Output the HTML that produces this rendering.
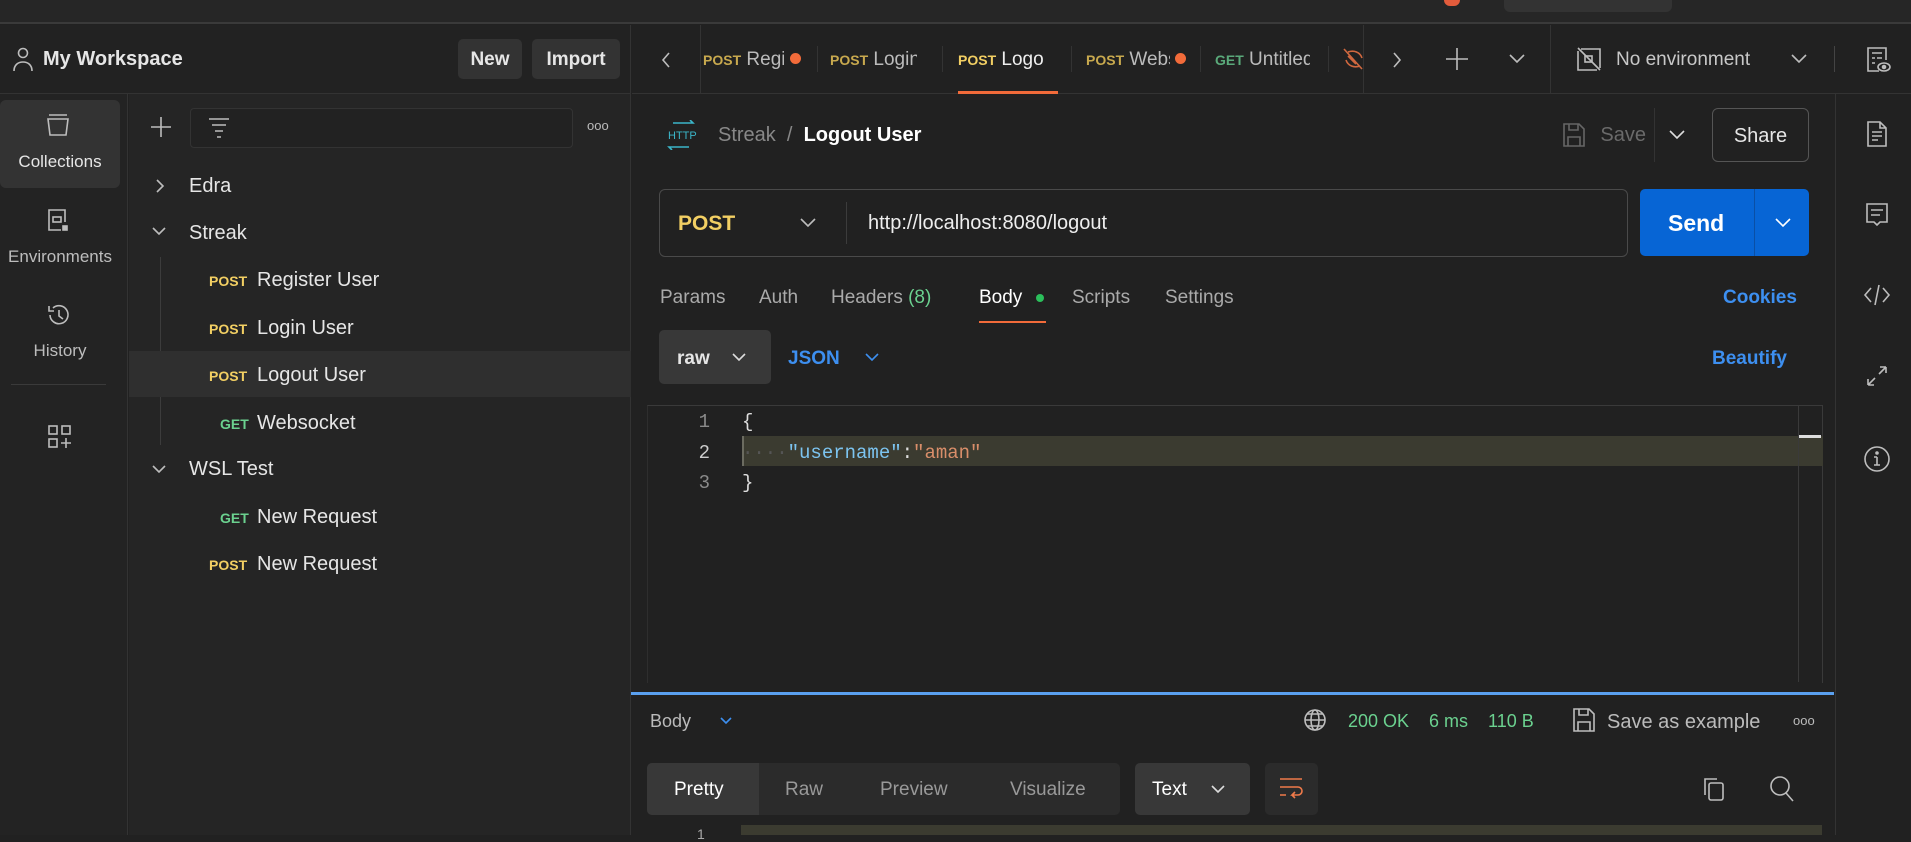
<!DOCTYPE html>
<html><head><meta charset="utf-8"><style>
*{box-sizing:border-box;margin:0;padding:0}
body{width:1911px;height:835px;background:#212121;font-family:"Liberation Sans",sans-serif;color:#e6e6e6;position:relative;overflow:hidden}
.a{position:absolute;white-space:nowrap}
svg{position:absolute;fill:none;stroke:#bdbdbd;stroke-width:1.6}
.post{color:#f2cf63;font-weight:bold;font-size:14px}
.get{color:#6bd18f;font-weight:bold;font-size:14px}
.ti{font-size:20px;color:#e6e6e6}
.tab{position:absolute;top:49px;font-size:19px;color:#bbb;white-space:nowrap;overflow:hidden}
</style></head><body>
<!-- top bar -->
<div class="a" style="left:0;top:0;width:1911px;height:24px;background:#262626;border-bottom:2px solid #3a3a3a"></div>
<div class="a" style="left:1444px;top:0;width:16px;height:6px;background:#e25c3c;border-radius:0 0 8px 8px"></div>
<div class="a" style="left:1504px;top:0;width:168px;height:12px;background:#333;border-radius:0 0 6px 6px"></div>
<!-- left header -->
<div class="a" style="left:0;top:25px;width:631px;height:69px;background:#222;border-bottom:1px solid #333;border-right:1px solid #333"></div>
<svg style="left:11px;top:46px" width="24" height="26" viewBox="0 0 24 26"><circle cx="12" cy="7" r="4.5"/><path d="M3 25c0-6 4-9 9-9s9 3 9 9"/></svg>
<div class="a" style="left:43px;top:48px;font-size:20px;font-weight:bold">My Workspace</div>
<div class="a" style="left:458px;top:39px;width:64px;height:40px;background:#333;border-radius:5px;font-size:19px;font-weight:bold;text-align:center;line-height:42px">New</div>
<div class="a" style="left:532px;top:39px;width:88px;height:40px;background:#333;border-radius:5px;font-size:19px;font-weight:bold;text-align:center;line-height:42px">Import</div>
<!-- icon nav -->
<div class="a" style="left:0;top:94px;width:128px;height:741px;background:#232323;border-right:1px solid #333"></div>
<div class="a" style="left:0;top:100px;width:120px;height:88px;background:#333;border-radius:6px"></div>
<svg style="left:46px;top:113px" width="24" height="26" viewBox="0 0 24 26"><path d="M3 2h18M2 6h20l-2 16H4z"/></svg>
<div class="a" style="left:0;top:152px;width:120px;text-align:center;font-size:17px">Collections</div>
<svg style="left:46px;top:208px" width="24" height="26" viewBox="0 0 24 26"><path d="M19 14V2H3v20h12"/><rect x="7" y="9" width="8" height="5"/><rect x="17" y="18" width="4" height="4" fill="#bdbdbd"/></svg>
<div class="a" style="left:0;top:247px;width:120px;text-align:center;font-size:17px;color:#bdbdbd">Environments</div>
<svg style="left:46px;top:302px" width="26" height="26" viewBox="0 0 26 26"><path d="M4 13a9 9 0 1 0 3-7M3 4v5h5M13 8v6l4 3"/></svg>
<div class="a" style="left:0;top:341px;width:120px;text-align:center;font-size:17px;color:#bdbdbd">History</div>
<div class="a" style="left:11px;top:384px;width:95px;height:1px;background:#3a3a3a"></div>
<svg style="left:47px;top:424px" width="26" height="26" viewBox="0 0 26 26"><rect x="2" y="2" width="8" height="8"/><rect x="15" y="2" width="8" height="8"/><rect x="2" y="15" width="8" height="8"/><path d="M19 14v10M14 19h10"/></svg>
<!-- collection tree -->
<div class="a" style="left:129px;top:94px;width:502px;height:741px;background:#252525;border-right:1px solid #333"></div>
<svg style="left:150px;top:116px" width="22" height="22" viewBox="0 0 22 22"><path d="M11 1v20M1 11h20"/></svg>
<div class="a" style="left:190px;top:108px;width:383px;height:40px;border:1px solid #333;border-radius:4px;background:#222"></div>
<svg style="left:208px;top:117px" width="22" height="22" viewBox="0 0 22 22"><path d="M1 2h20M4 8h14M7 14h8M9 20h4"/></svg>
<div class="a" style="left:587px;top:118px;font-size:13px;color:#bbb;letter-spacing:0px">ooo</div>
<svg style="left:154px;top:178px" width="12" height="16" viewBox="0 0 12 16"><path d="M3 2l6 6-6 6"/></svg>
<div class="a ti" style="left:189px;top:175px">Edra</div>
<svg style="left:151px;top:225px" width="16" height="12" viewBox="0 0 16 12"><path d="M2 3l6 6 6-6"/></svg>
<div class="a ti" style="left:189px;top:222px">Streak</div>
<div class="a" style="left:160px;top:257px;width:1px;height:188px;background:#3c3c3c"></div>
<div class="a" style="left:129px;top:351px;width:502px;height:46px;background:#2f2f2f"></div>
<div class="a post" style="left:209px;top:273px">POST</div><div class="a ti" style="left:257px;top:269px">Register User</div>
<div class="a post" style="left:209px;top:321px">POST</div><div class="a ti" style="left:257px;top:317px">Login User</div>
<div class="a post" style="left:209px;top:368px">POST</div><div class="a ti" style="left:257px;top:364px">Logout User</div>
<div class="a get" style="left:220px;top:416px">GET</div><div class="a ti" style="left:257px;top:412px">Websocket</div>
<svg style="left:151px;top:463px" width="16" height="12" viewBox="0 0 16 12"><path d="M2 3l6 6 6-6"/></svg>
<div class="a ti" style="left:189px;top:458px">WSL Test</div>
<div class="a get" style="left:220px;top:510px">GET</div><div class="a ti" style="left:257px;top:506px">New Request</div>
<div class="a post" style="left:209px;top:557px">POST</div><div class="a ti" style="left:257px;top:553px">New Request</div>
<!-- tabs bar -->
<div class="a" style="left:632px;top:25px;width:1279px;height:69px;border-bottom:1px solid #333"></div>
<svg style="left:660px;top:51px" width="12" height="18" viewBox="0 0 12 18"><path d="M9 2L3 9l6 7"/></svg>
<div class="a" style="left:700px;top:25px;width:1px;height:68px;background:#333"></div>
<div class="tab" style="left:703px;width:81px"><span class="post" style="color:#c8a94e">POST</span> Register</div>
<div class="a" style="left:790px;top:53px;width:11px;height:11px;border-radius:6px;background:#f26b3a"></div>
<div class="a" style="left:817px;top:46px;width:1px;height:26px;background:#333"></div>
<div class="tab" style="left:830px;width:87px"><span class="post" style="color:#c8a94e">POST</span> Login User</div>
<div class="a" style="left:942px;top:46px;width:1px;height:26px;background:#333"></div>
<div class="tab" style="left:958px;width:86px;color:#eee"><span class="post">POST</span> Logout</div>
<div class="a" style="left:958px;top:91px;width:100px;height:3px;background:#f26b3a"></div>
<div class="a" style="left:1071px;top:46px;width:1px;height:26px;background:#333"></div>
<div class="tab" style="left:1086px;width:84px"><span class="post" style="color:#c8a94e">POST</span> Websocket</div>
<div class="a" style="left:1175px;top:53px;width:11px;height:11px;border-radius:6px;background:#f26b3a"></div>
<div class="a" style="left:1200px;top:46px;width:1px;height:26px;background:#333"></div>
<div class="tab" style="left:1215px;width:95px"><span class="get" style="color:#5aa97a">GET</span> Untitled</div>
<div class="a" style="left:1328px;top:46px;width:1px;height:26px;background:#333"></div>
<svg style="left:1342px;top:46px;stroke:#d0683f" width="22" height="26" viewBox="0 0 22 26"><path d="M2 3l18 20M6 10l8 8M4 14c2 6 8 8 14 6M20 12c-2-6-8-8-14-6"/></svg>
<div class="a" style="left:1363px;top:25px;width:1px;height:68px;background:#333"></div>
<svg style="left:1391px;top:51px" width="12" height="18" viewBox="0 0 12 18"><path d="M3 2l6 7-6 7"/></svg>
<svg style="left:1445px;top:47px" width="24" height="24" viewBox="0 0 24 24"><path d="M12 1v22M1 12h22"/></svg>
<svg style="left:1508px;top:52px" width="18" height="12" viewBox="0 0 18 12"><path d="M2 3l7 7 7-7"/></svg>
<div class="a" style="left:1550px;top:25px;width:1px;height:68px;background:#333"></div>
<svg style="left:1576px;top:46px" width="26" height="26" viewBox="0 0 26 26"><path d="M5 3h19v19M21 24H2V5M2 2l22 22"/><rect x="9" y="10" width="7" height="6"/></svg>
<div class="a" style="left:1616px;top:49px;font-size:19px;color:#c8c8c8">No environment</div>
<svg style="left:1790px;top:52px" width="18" height="12" viewBox="0 0 18 12"><path d="M2 3l7 7 7-7"/></svg>
<div class="a" style="left:1834px;top:46px;width:1px;height:26px;background:#444"></div>
<svg style="left:1865px;top:46px" width="26" height="28" viewBox="0 0 26 28"><path d="M14 25H3V2h18v12M7 7h10M7 12h3M12 12h5M7 17h3"/><ellipse cx="19" cy="21" rx="6" ry="4"/><circle cx="19" cy="21" r="1.5" fill="#bdbdbd"/></svg>
<!-- right sidebar -->
<div class="a" style="left:1835px;top:94px;width:1px;height:741px;background:#333"></div>
<svg style="left:1866px;top:120px" width="22" height="28" viewBox="0 0 22 28"><path d="M2 2h12l6 6v18H2zM14 2v6h6M6 12h10M6 16h10M6 20h6"/></svg>
<svg style="left:1865px;top:202px" width="24" height="26" viewBox="0 0 24 26"><path d="M2 2h20v18H15l-3 3-3-3H2zM6 8h12M6 13h9"/></svg>
<svg style="left:1863px;top:284px" width="28" height="22" viewBox="0 0 28 22"><path d="M8 4L2 11l6 7M20 4l6 7-6 7M16 1L12 21"/></svg>
<svg style="left:1866px;top:365px" width="22" height="22" viewBox="0 0 22 22"><path d="M2 20L9 13M2 20v-6M2 20h6M20 2l-7 7M20 2v6M20 2h-6"/></svg>
<svg style="left:1863px;top:445px" width="28" height="28" viewBox="0 0 28 28"><circle cx="14" cy="14" r="12"/><path d="M14 12v8M11 20h6M11 12h3"/><circle cx="14" cy="8" r="1" fill="#bdbdbd"/></svg>
<!-- breadcrumb -->
<svg style="left:665px;top:120px;stroke:#3bb6c9" width="32" height="30" viewBox="0 0 32 30"><path d="M8 3h20l-3-3M24 27H4l3 3"/><text x="3" y="19" font-size="11" fill="#3bb6c9" stroke="none" font-family="Liberation Sans">HTTP</text></svg>
<div class="a" style="left:718px;top:124px;font-size:20px;color:#888">Streak&nbsp;&nbsp;/&nbsp;&nbsp;<span style="color:#fff;font-weight:bold">Logout User</span></div>
<svg style="left:1562px;top:122px;stroke:#666" width="24" height="26" viewBox="0 0 24 26"><path d="M2 2h15l5 5v17H2zM7 2v6h9V2M6 24v-9h12v9"/></svg>
<div class="a" style="left:1571px;top:124px;width:75px;text-align:right;font-size:20px;color:#6a6a6a">Save</div>
<div class="a" style="left:1654px;top:108px;width:1px;height:54px;background:#333"></div>
<svg style="left:1668px;top:128px" width="18" height="12" viewBox="0 0 18 12"><path d="M2 3l7 7 7-7" stroke="#ddd"/></svg>
<div class="a" style="left:1712px;top:108px;width:97px;height:54px;border:1px solid #555;border-radius:6px;text-align:center;line-height:54px;font-size:20px">Share</div>
<!-- URL -->
<div class="a" style="left:659px;top:189px;width:969px;height:68px;border:1px solid #4a4a4a;border-radius:6px"></div>
<div class="a" style="left:678px;top:212px;font-size:21px;font-weight:bold;color:#f2cf63">POST</div>
<svg style="left:799px;top:216px" width="18" height="12" viewBox="0 0 18 12"><path d="M2 3l7 7 7-7"/></svg>
<div class="a" style="left:846px;top:202px;width:1px;height:42px;background:#3c3c3c"></div>
<div class="a" style="left:868px;top:212px;font-size:20px;color:#eee">http://localhost:8080/logout</div>
<div class="a" style="left:1640px;top:189px;width:169px;height:67px;background:#0765d5;border-radius:5px"></div>
<div class="a" style="left:1754px;top:189px;width:1px;height:67px;background:#0a4fa5"></div>
<div class="a" style="left:1668px;top:210px;font-size:23px;font-weight:bold;color:#fff">Send</div>
<svg style="left:1774px;top:216px;stroke:#fff" width="18" height="12" viewBox="0 0 18 12"><path d="M2 3l7 7 7-7"/></svg>
<!-- request tabs -->
<div class="a" style="left:660px;top:287px;font-size:19px;color:#aaa">Params</div>
<div class="a" style="left:759px;top:287px;font-size:19px;color:#aaa">Auth</div>
<div class="a" style="left:831px;top:287px;font-size:19px;color:#aaa">Headers <span style="color:#6bd18f">(8)</span></div>
<div class="a" style="left:979px;top:287px;font-size:19px;color:#fff">Body</div>
<div class="a" style="left:1036px;top:294px;width:8px;height:8px;border-radius:4px;background:#2bbf5b"></div>
<div class="a" style="left:979px;top:321px;width:67px;height:2px;background:#f26b3a"></div>
<div class="a" style="left:1072px;top:287px;font-size:19px;color:#aaa">Scripts</div>
<div class="a" style="left:1165px;top:287px;font-size:19px;color:#aaa">Settings</div>
<div class="a" style="left:1723px;top:287px;font-size:19px;font-weight:bold;color:#3d8ff0">Cookies</div>
<!-- raw JSON -->
<div class="a" style="left:659px;top:330px;width:112px;height:54px;background:#383838;border-radius:5px"></div>
<div class="a" style="left:677px;top:348px;font-size:19px;font-weight:bold">raw</div>
<svg style="left:731px;top:351px;stroke:#ddd" width="16" height="12" viewBox="0 0 16 12"><path d="M2 3l6 6 6-6"/></svg>
<div class="a" style="left:788px;top:348px;font-size:19px;font-weight:bold;color:#3d8ff0">JSON</div>
<svg style="left:864px;top:351px;stroke:#3d8ff0" width="16" height="12" viewBox="0 0 16 12"><path d="M2 3l6 6 6-6"/></svg>
<div class="a" style="left:1712px;top:348px;font-size:19px;font-weight:bold;color:#3d8ff0">Beautify</div>
<!-- editor -->
<div class="a" style="left:647px;top:405px;width:1176px;height:278px;border-top:1px solid #3a3a3a;border-left:1px solid #2e2e2e;border-right:1px solid #3a3a3a"></div>
<div class="a" style="left:742px;top:436px;width:1081px;height:30px;background:#3b3b30;border-left:2px solid #6b6b60"></div>
<div class="a" style="left:1798px;top:406px;width:1px;height:276px;background:#3a3a3a"></div>
<div class="a" style="left:1799px;top:435px;width:22px;height:3px;background:#ddd"></div>
<div class="a" style="font-family:'Liberation Mono',monospace;font-size:19px;left:692px;top:407px;color:#8a8a8a;line-height:30.5px;text-align:right;width:18px">1<br><span style="color:#ccc">2</span><br>3</div>
<div class="a" style="font-family:'Liberation Mono',monospace;font-size:19px;left:742px;top:407px;line-height:30.5px;color:#ddd">{<br><span style="color:#555">····</span><span style="color:#7cc4f0">"username"</span>:<span style="color:#d98e6a">"aman"</span><br>}</div>
<!-- response -->
<div class="a" style="left:631px;top:692px;width:1203px;height:3px;background:#5aa0ef"></div>
<div class="a" style="left:650px;top:711px;font-size:18px;color:#bbb">Body</div>
<svg style="left:719px;top:716px;stroke:#3d8ff0" width="14" height="10" viewBox="0 0 14 10"><path d="M2 2l5 5 5-5"/></svg>
<svg style="left:1303px;top:708px" width="24" height="24" viewBox="0 0 24 24"><circle cx="12" cy="12" r="10"/><ellipse cx="12" cy="12" rx="4" ry="10"/><path d="M2 12h20M4 6h16M4 18h16"/></svg>
<div class="a" style="left:1348px;top:711px;font-size:18px;color:#6bd18f">200 OK&nbsp;&nbsp;&nbsp;&nbsp;6 ms&nbsp;&nbsp;&nbsp;&nbsp;110 B</div>
<svg style="left:1572px;top:707px" width="24" height="26" viewBox="0 0 24 26"><path d="M2 2h15l5 5v17H2zM7 2v6h9V2M6 24v-9h12v9"/></svg>
<div class="a" style="left:1607px;top:711px;font-size:20px;color:#bbb">Save as example</div>
<div class="a" style="left:1793px;top:713px;font-size:13px;color:#bbb">ooo</div>
<div class="a" style="left:647px;top:763px;width:473px;height:52px;background:#2b2b2b;border-radius:5px"></div>
<div class="a" style="left:647px;top:763px;width:112px;height:52px;background:#383838;border-radius:5px 0 0 5px"></div>
<div class="a" style="left:674px;top:779px;font-size:19px;color:#fff">Pretty</div>
<div class="a" style="left:785px;top:779px;font-size:19px;color:#999">Raw</div>
<div class="a" style="left:880px;top:779px;font-size:19px;color:#999">Preview</div>
<div class="a" style="left:1010px;top:779px;font-size:19px;color:#999">Visualize</div>
<div class="a" style="left:1135px;top:763px;width:115px;height:52px;background:#383838;border-radius:5px"></div>
<div class="a" style="left:1152px;top:779px;font-size:19px;color:#fff">Text</div>
<svg style="left:1210px;top:783px;stroke:#ddd" width="16" height="12" viewBox="0 0 16 12"><path d="M2 3l6 6 6-6"/></svg>
<div class="a" style="left:1265px;top:763px;width:53px;height:52px;background:#2b2b2b;border-radius:5px"></div>
<svg style="left:1278px;top:776px;stroke:#f07a4a" width="26" height="26" viewBox="0 0 26 26"><path d="M2 3h22M2 11h18a4 4 0 0 1 0 8h-6l3-3M14 19l3 3M2 19h6"/></svg>
<svg style="left:1702px;top:776px" width="24" height="26" viewBox="0 0 24 26"><rect x="7" y="7" width="14" height="17" rx="2"/><path d="M3 19V3h12"/></svg>
<svg style="left:1769px;top:775px" width="26" height="28" viewBox="0 0 26 28"><circle cx="11" cy="11" r="9"/><path d="M17 18l7 8"/></svg>
<div class="a" style="left:741px;top:825px;width:1081px;height:10px;background:#3b3b30"></div>
<div class="a" style="left:697px;top:826px;font-size:14px;color:#aaa">1</div>
</body></html>
